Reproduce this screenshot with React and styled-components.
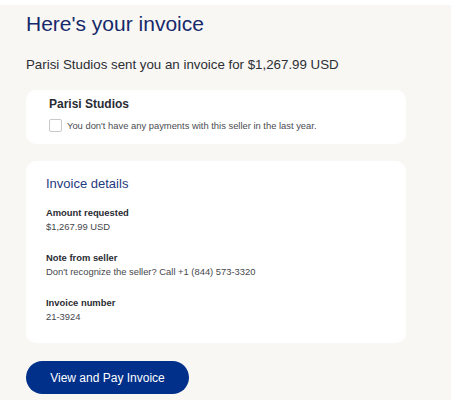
import React from 'react';
import styled, { createGlobalStyle } from 'styled-components';

const GlobalStyle = createGlobalStyle`
  html, body {
    margin: 0;
    padding: 0;
    background: #f8f7f3;
    font-family: "Liberation Sans", Arial, sans-serif;
  }
`;

const Page = styled.div`
  width: 451px;
  height: 400px;
  overflow: hidden;
  border-top: 5px solid #ffffff;
  box-sizing: border-box;
  background: #f8f7f3;
`;

const Content = styled.div`
  padding: 4px 45px 0 26px;
  display: flex;
  flex-direction: column;
`;

const Title = styled.h1`
  margin: 0;
  font-size: 21px;
  line-height: 30px;
  font-weight: 400;
  color: #16296b;
`;

const Intro = styled.p`
  margin: 17px 0 0;
  font-size: 13.3px;
  line-height: 18px;
  color: #2c2e34;
`;

const Card = styled.section`
  background: #ffffff;
  border-radius: 10px;
  padding: ${(p) => p.$pad};
  margin-top: ${(p) => p.$top};
`;

const SellerName = styled.h2`
  margin: 0;
  font-size: 12px;
  line-height: 16px;
  font-weight: 700;
  color: #2a2c33;
`;

const CheckRow = styled.label`
  display: flex;
  align-items: center;
  gap: 5px;
  margin-top: 7px;
  font-size: 9.4px;
  line-height: 12px;
  color: #4a4c52;
`;

const Box = styled.span`
  width: 11px;
  height: 11px;
  border: 1px solid #c9c9c9;
  border-radius: 2px;
  background: #fff;
  flex: none;
`;

const DetailsTitle = styled.h2`
  margin: 0 0 13px;
  font-size: 13px;
  line-height: 18px;
  font-weight: 400;
  color: #1f3a80;
`;

const Field = styled.div`
  margin-top: ${(p) => (p.$first ? '0' : '17px')};
`;

const Label = styled.div`
  font-size: 9.4px;
  line-height: 14px;
  font-weight: 700;
  color: #2a2c33;
`;

const Value = styled.div`
  font-size: 9.4px;
  line-height: 14px;
  color: #45474d;
`;

const PayButton = styled.button`
  margin-top: 18px;
  align-self: flex-start;
  width: 163px;
  height: 33px;
  border: none;
  border-radius: 17px;
  background: #00308a;
  color: #ffffff;
  font-family: "Liberation Sans", Arial, sans-serif;
  font-size: 12px;
  cursor: pointer;
`;

const fields = [
  { label: 'Amount requested', value: '$1,267.99 USD' },
  { label: 'Note from seller', value: "Don't recognize the seller? Call +1 (844) 573-3320" },
  { label: 'Invoice number', value: '21-3924' },
];

export default function App() {
  return (
    <Page>
      <GlobalStyle />
      <Content>
        <Title>Here's your invoice</Title>
        <Intro>Parisi Studios sent you an invoice for $1,267.99 USD</Intro>
        <Card $pad="6px 24px 12px 23px" $top="16px">
          <SellerName>Parisi Studios</SellerName>
          <CheckRow>
            <Box />
            You don't have any payments with this seller in the last year.
          </CheckRow>
        </Card>
        <Card $pad="14px 20px 19px 20px" $top="17px">
          <DetailsTitle>Invoice details</DetailsTitle>
          {fields.map((f, i) => (
            <Field key={f.label} $first={i === 0}>
              <Label>{f.label}</Label>
              <Value>{f.value}</Value>
            </Field>
          ))}
        </Card>
        <PayButton>View and Pay Invoice</PayButton>
      </Content>
    </Page>
  );
}
